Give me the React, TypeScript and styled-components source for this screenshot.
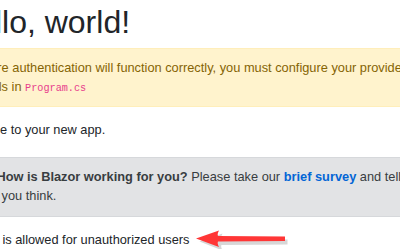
import React from "react";
import styled, { createGlobalStyle } from "styled-components";

const GlobalStyle = createGlobalStyle`
  html, body {
    margin: 0;
    padding: 0;
    background: #ffffff;
    overflow: hidden;
  }
  body {
    font-family: "Liberation Sans", Arial, sans-serif;
    font-size: 12.8px;
    line-height: 1.5;
    color: #212529;
  }
`;

const Content = styled.main`
  width: 1000px;
  margin-left: -46px;
  padding-top: 3px;
`;

const Heading = styled.h1`
  margin: 0 0 6.4px;
  font-size: 32px;
  font-weight: 400;
  line-height: 1.2;
  color: #212529;
`;

const Alert = styled.div<{ $tone: "warning" | "secondary"; $top?: number }>`
  margin: ${(p) => p.$top ?? 0}px 0 12.8px;
  padding: 8.8px 16px 10.4px;
  border: 1px solid ${(p) => (p.$tone === "warning" ? "#ffeeba" : "#d6d8db")};
  background: ${(p) => (p.$tone === "warning" ? "#fff3cd" : "#e2e3e5")};
  color: ${(p) => (p.$tone === "warning" ? "#856404" : "#383d41")};
`;

const Code = styled.code`
  font-family: "Liberation Mono", "DejaVu Sans Mono", monospace;
  font-size: 10.2px;
  color: #e83e8c;
`;

const Pencil = styled.span`
  display: inline-block;
  width: 19px;
  margin-right: 6.4px;
`;

const Strong = styled.strong`
  font-weight: 700;
`;

const SurveyLink = styled.a`
  font-weight: 700;
  color: #0366d6;
  text-decoration: none;
`;

const Line = styled.p`
  margin: 0;
  display: flex;
  align-items: center;
  white-space: nowrap;
  line-height: 19.2px;
`;

const Arrow = styled.svg`
  margin-left: 6px;
  flex: none;
`;

export default function App() {
  return (
    <>
      <GlobalStyle />
      <Content>
        <Heading>Hello, world!</Heading>
        <Alert $tone="warning">
          Before authentication will function correctly, you must configure your provider
          <br />
          details in <Code>Program.cs</Code>
        </Alert>
        Welcome to your new app.
        <Alert $tone="secondary" $top={17.6}>
          <Pencil />
          <Strong>How is Blazor working for you?</Strong> Please take our{" "}
          <SurveyLink href="#">brief survey</SurveyLink> and tell us
          <br />
          what you think.
        </Alert>
        <Line>
          Content is allowed for unauthorized users
          <Arrow width="96" height="20" viewBox="0 0 96 20">
            <path
              d="M3 11 L26 3 Q24 7 25 8.5 L91 9 L91 14 L25 14.5 Q24 16 26 20 Z"
              fill="#b0b0b0"
              opacity="0.5"
              transform="translate(1.5 1.5)"
            />
            <path
              d="M1 9.5 L24 1.5 Q22 5 23 7 L90 7.5 L90 12 L23 12.5 Q22 14 24 18 Z"
              fill="#ff3636"
            />
          </Arrow>
        </Line>
      </Content>
    </>
  );
}
